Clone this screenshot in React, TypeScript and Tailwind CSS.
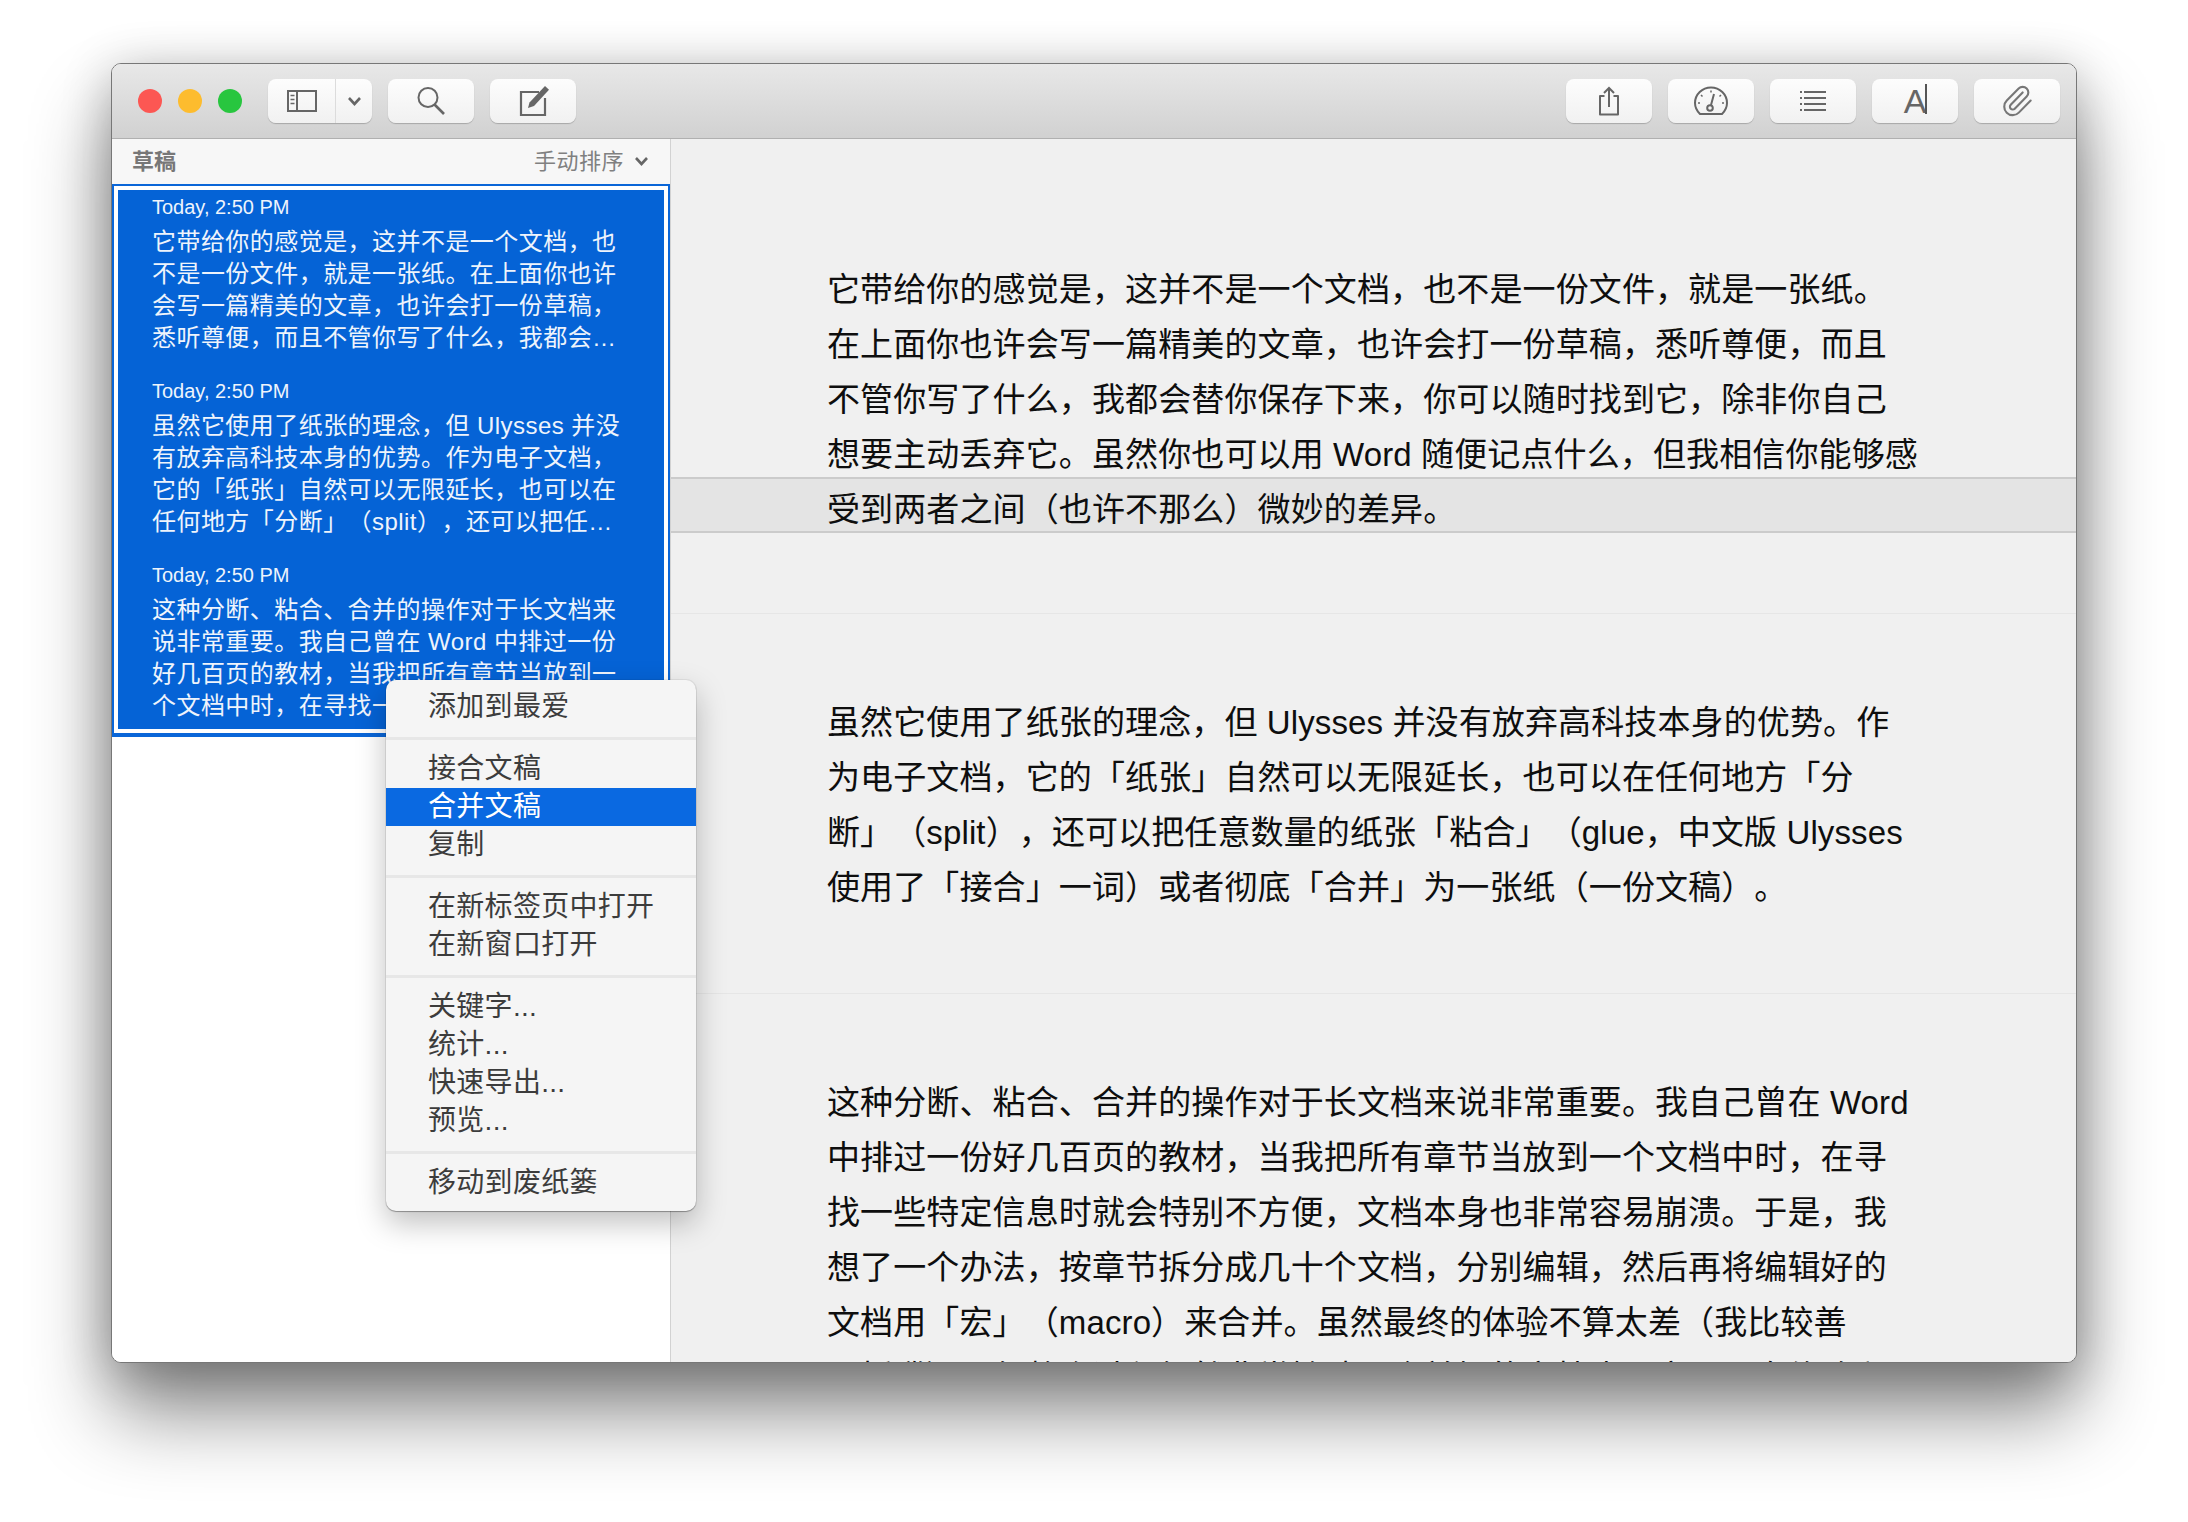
// Ulysses-style editor window with a context menu over the sheet list
import React from 'react';
import { Paperclip } from 'lucide-react';

const sheets = [
  ['它带给你的感觉是，这并不是一个文档，也', '不是一份文件，就是一张纸。在上面你也许', '会写一篇精美的文章，也许会打一份草稿，', '悉听尊便，而且不管你写了什么，我都会…'],
  ['虽然它使用了纸张的理念，但 Ulysses 并没', '有放弃高科技本身的优势。作为电子文档，', '它的「纸张」自然可以无限延长，也可以在', '任何地方「分断」（split），还可以把任…'],
  ['这种分断、粘合、合并的操作对于长文档来', '说非常重要。我自己曾在 Word 中排过一份', '好几百页的教材，当我把所有章节当放到一', '个文档中时，在寻找一些特定信息时就会特…'],
];

const paragraphs = [
  ['它带给你的感觉是，这并不是一个文档，也不是一份文件，就是一张纸。', '在上面你也许会写一篇精美的文章，也许会打一份草稿，悉听尊便，而且', '不管你写了什么，我都会替你保存下来，你可以随时找到它，除非你自己', '想要主动丢弃它。虽然你也可以用 Word 随便记点什么，但我相信你能够感'],
  ['虽然它使用了纸张的理念，但 Ulysses 并没有放弃高科技本身的优势。作', '为电子文档，它的「纸张」自然可以无限延长，也可以在任何地方「分', '断」（split），还可以把任意数量的纸张「粘合」（glue，中文版 Ulysses', '使用了「接合」一词）或者彻底「合并」为一张纸（一份文稿）。'],
  ['这种分断、粘合、合并的操作对于长文档来说非常重要。我自己曾在 Word', '中排过一份好几百页的教材，当我把所有章节当放到一个文档中时，在寻', '找一些特定信息时就会特别不方便，文档本身也非常容易崩溃。于是，我', '想了一个办法，按章节拆分成几十个文档，分别编辑，然后再将编辑好的', '文档用「宏」（macro）来合并。虽然最终的体验不算太差（我比较善', '于折腾），但整个过程仍然非常繁琐，合并好的文档也不容易再次修改和'],
];

const menu = [
  ['添加到最爱'],
  ['接合文稿', '合并文稿', '复制'],
  ['在新标签页中打开', '在新窗口打开'],
  ['关键字...', '统计...', '快速导出...', '预览...'],
  ['移动到废纸篓'],
];

const Button = ({ children, className = 'w-[86px]' }: { children: React.ReactNode; className?: string }) => (
  <div className={`${className} h-[44px] rounded-[8px] bg-gradient-to-b from-[#fdfdfd] to-[#f1f1f1] shadow-[0_1px_1px_rgba(0,0,0,0.22)] flex items-center justify-center text-[#6a6a6a]`}>
    {children}
  </div>
);

const Chevron = () => (
  <svg width="15" height="11" viewBox="0 0 15 11" fill="none" stroke="#666" strokeWidth="2.6">
    <path d="M2 2l5.500 6 5.500-6" />
  </svg>
);

export default function App() {
  return (
    <div className="w-[2188px] h-[1522px] bg-white pl-[111px] pt-[63px] font-['Liberation_Sans','Noto_Sans_CJK_SC',sans-serif] [text-spacing-trim:space-all] overflow-hidden" lang="zh-CN">
      <div className="relative w-[1966px] h-[1300px] flex flex-col rounded-[10px] border border-[#777] bg-white shadow-[0_50px_80px_rgba(0,0,0,0.46),0_8px_50px_rgba(0,0,0,0.24)]">
        {/* toolbar */}
        <div className="h-[75px] shrink-0 flex items-center pl-[26px] pr-[16px] rounded-t-[9px] border-b border-[#b0b0b0] bg-gradient-to-b from-[#e8e8e8] to-[#d1d1d1]">
          <div className="flex gap-[16px]">
            <div className="w-[24px] h-[24px] rounded-full bg-[#fc5753]" />
            <div className="w-[24px] h-[24px] rounded-full bg-[#fdbc2e]" />
            <div className="w-[24px] h-[24px] rounded-full bg-[#28c63f]" />
          </div>
          <div className="ml-[26px] flex gap-[16px]">
            <div className="w-[104px] h-[44px] rounded-[8px] bg-gradient-to-b from-[#fdfdfd] to-[#f1f1f1] shadow-[0_1px_1px_rgba(0,0,0,0.22)] flex">
              <div className="w-[68px] border-r border-[#dcdcdc] flex items-center justify-center">
                <svg width="32" height="24" viewBox="0 0 32 24" fill="none" stroke="#666" strokeWidth="2">
                  <rect x="2" y="2" width="28" height="20" />
                  <path d="M11 2v20" />
                  <path d="M4.500 6.500h4M4.500 10.500h4M4.500 14.500h4" strokeWidth="1.600" />
                </svg>
              </div>
              <div className="flex-1 flex items-center justify-center">
                <Chevron />
              </div>
            </div>
            <Button>
              <svg width="30" height="30" viewBox="0 0 30 30" fill="none" stroke="#666" strokeWidth="2">
                <circle cx="12" cy="11.500" r="9.500" />
                <path d="M18.500 18.500L28 28" strokeWidth="2.600" />
              </svg>
            </Button>
            <Button>
              <svg width="34" height="34" viewBox="0 0 34 34" fill="none" stroke="#666" strokeWidth="2.200">
                <path d="M23 8H5v23h24V14" />
                <path d="M12 24l1.500-5.500L29 2l4 3.800L18 22z" fill="#666" stroke="none" />
              </svg>
            </Button>
          </div>
          <div className="ml-auto flex gap-[16px]">
            <Button>
              <svg width="24" height="30" viewBox="0 0 24 30" fill="none" stroke="#666" strokeWidth="2">
                <path d="M7.500 10H3v18.500h18V10h-4.500" strokeLinejoin="round" />
                <path d="M12 21V2M7 7l5-5 5 5" />
              </svg>
            </Button>
            <Button>
              <svg width="36" height="30" viewBox="0 0 36 30" fill="none" stroke="#666" strokeWidth="2">
                <path d="M7 28h22c3-3 5-6 5-11A16 15.500 0 0 0 2 17c0 5 2 8 5 11z" strokeLinejoin="round" />
                <circle cx="17" cy="22" r="2.800" />
                <path d="M18 19l3-11" />
                <path d="M18 4.500v2M8 9l1.500 1.500M28 9l-1.500 1.500M5 17h2M29 17h2" strokeWidth="1.500" />
              </svg>
            </Button>
            <Button>
              <svg width="28" height="22" viewBox="0 0 28 22" fill="none" stroke="#666">
                <path d="M5 2h22M5 8h22M5 14h22M5 20h22" strokeWidth="2.200" />
                <path d="M1 2h2M1 8h2M1 14h2M1 20h2" strokeWidth="2.200" />
              </svg>
            </Button>
            <Button>
              <span className="relative text-[34px] leading-none text-[#666]">
                A
                <span className="absolute right-[-1px] top-[0px] w-[2px] h-[30px] bg-[#555]" />
              </span>
            </Button>
            <Button>
              <Paperclip size={34} strokeWidth={1.5} className="text-[#777]" />
            </Button>
          </div>
        </div>

        <div className="flex-1 flex min-h-0 overflow-hidden rounded-b-[9px]">
          {/* sheet list */}
          <div className="w-[559px] shrink-0 border-r border-[#d2d2d2] bg-white flex flex-col">
            <div className="h-[45px] shrink-0 bg-[#f7f7f7] flex items-center justify-between pl-[20px] pr-[21px] text-[22px] text-[#808080]">
              <span className="font-bold text-[#777]">草稿</span>
              <span className="flex items-center gap-[10px] tracking-[0.5px]">
                手动排序
                <Chevron />
              </span>
            </div>
            <div className="border-[2px] border-b-[4px] border-[#0a66d8]">
              <div className="border-[4px] border-white bg-[#0563d6] pl-[34px] pt-[3px] pb-[7px] text-[#eef4fc]">
                {sheets.map((lines, i) => (
                  <div key={i} className="pb-[23px] last:pb-0">
                    <div className="h-[28px] leading-[28px] text-[20px]">Today, 2:50 PM</div>
                    <div className="mt-[5px] text-[24px] leading-[32px] tracking-[0.45px] whitespace-nowrap">
                      {lines.map((l) => (
                        <div key={l}>{l}</div>
                      ))}
                    </div>
                  </div>
                ))}
              </div>
            </div>
          </div>

          {/* editor */}
          <div className="flex-1 min-w-0 overflow-hidden bg-[#f0f0f0] text-[33px] leading-[55px] tracking-[0.12px] text-[#0e0e0e] whitespace-nowrap pt-[43px]">
            <div className="pt-[80px] pb-[76px] border-b border-[#e6e6e6]">
              {paragraphs[0].map((l) => (
                <div key={l} className="pl-[156px]">{l}</div>
              ))}
              <div className="pl-[156px] h-[56px] -mt-[5px] mb-[4px] pt-[3px] bg-[#e4e4e4] border-y-[2px] border-[#cbcbcb] leading-[56px]">
                受到两者之间（也许不那么）微妙的差异。
              </div>
            </div>
            <div className="pt-[81px] pb-[78px] border-b border-[#e6e6e6]">
              {paragraphs[1].map((l) => (
                <div key={l} className="pl-[156px]">{l}</div>
              ))}
            </div>
            <div className="pt-[81px]">
              {paragraphs[2].map((l) => (
                <div key={l} className="pl-[156px]">{l}</div>
              ))}
            </div>
          </div>
        </div>

        {/* context menu */}
        <div className="absolute left-[274px] top-[616px] w-[310px] h-[531px] rounded-[10px] bg-[#f5f5f5] shadow-[0_0_0_1px_rgba(0,0,0,0.06),0_1px_1px_rgba(0,0,0,0.3),0_12px_30px_rgba(0,0,0,0.25)] pt-[8px] text-[28px] leading-[38px] text-[#3c3c3c] tracking-[0.3px]">
          {menu.map((group, i) => (
            <div key={i}>
              {i > 0 && (
                <div className="h-[24px] flex items-center">
                  <div className="w-full h-[3px] bg-[#e7e7e7]" />
                </div>
              )}
              {group.map((item) => (
                <div
                  key={item}
                  className={item === '合并文稿' ? 'h-[38px] pl-[42px] bg-[#0a69e1] text-white' : 'h-[38px] pl-[42px]'}
                >
                  {item}
                </div>
              ))}
            </div>
          ))}
        </div>
      </div>
    </div>
  );
}
